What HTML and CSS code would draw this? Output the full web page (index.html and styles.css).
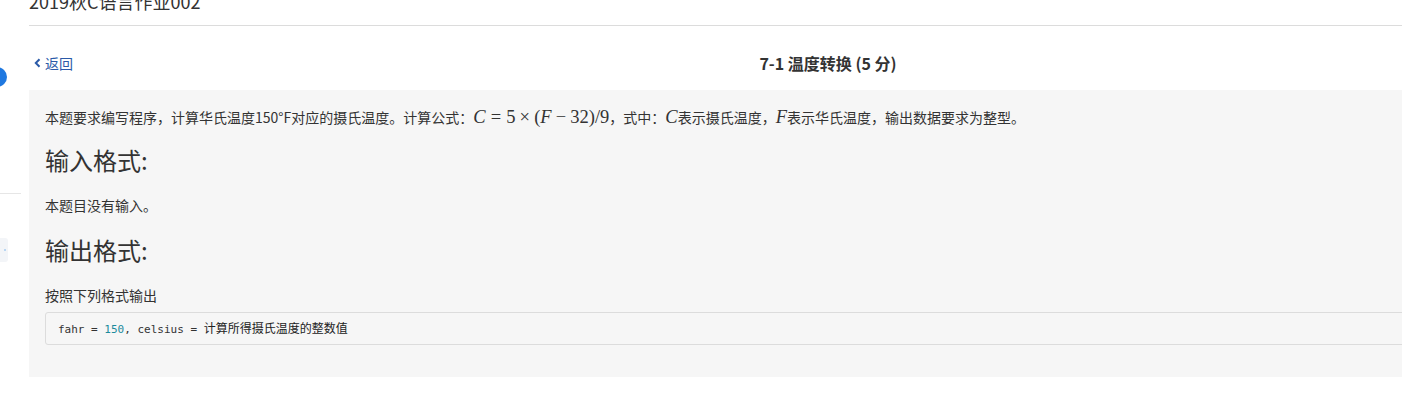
FILE: index.html
```html
<!DOCTYPE html>
<html lang="zh-CN">
<head>
<meta charset="utf-8">
<title>7-1 温度转换</title>
<link rel="stylesheet" href="styles.css">
</head>
<body>
<div class="layout">
  <aside class="sidebar">
    <div class="avatar"></div>
    <div class="side-rule"></div>
    <div class="side-chip"><span class="chip-mark"></span></div>
  </aside>
  <main class="main">
    <h1 class="set-title">2019秋C语言作业002</h1>
    <div class="problem-head">
      <a class="back" href="#">
        <svg class="chev" width="7" height="10" viewBox="0 0 7 10"><polyline points="5.5,1.2 1.8,5 5.5,8.8" fill="none" stroke="#2a5aa8" stroke-width="2"/></svg>
        <span>返回</span>
      </a>
      <div class="problem-title">7-1 温度转换 (5 分)</div>
      <div></div>
    </div>
    <section class="panel">
      <p class="txt">本题要求编写程序，计算华氏温度150°F对应的摄氏温度。计算公式：<span class="math"><i>C</i><span class="rel">=</span>5<span class="bin">×</span>(<i>F</i><span class="bin">−</span>32)/9</span>，式中：<span class="math"><i>C</i></span>表示摄氏温度，<span class="math"><i>F</i></span>表示华氏温度，输出数据要求为整型。</p>
      <h2 class="sec sec-first">输入格式:</h2>
      <p class="txt">本题目没有输入。</p>
      <h2 class="sec">输出格式:</h2>
      <p class="txt">按照下列格式输出</p>
      <pre class="code">fahr = <span class="num">150</span>, celsius = <span class="cjk">计算所得摄氏温度的整数值</span></pre>
    </section>
  </main>
</div>
</body>
</html>
```
FILE: styles.css
```css
html, body {
  margin: 0;
  padding: 0;
  overflow: hidden;
  background: #fff;
}
body {
  font-family: "Noto Sans CJK SC", "Noto Sans", sans-serif;
  color: #333;
  width: 1402px;
  height: 413px;
}
.layout {
  display: flex;
  align-items: flex-start;
}
.sidebar {
  width: 21px;
  flex: 0 0 21px;
  display: flex;
  flex-direction: column;
}
.avatar {
  width: 20px;
  height: 20px;
  border-radius: 50%;
  background: #1f78e0;
  margin-left: -13px;
  margin-top: 67px;
}
.side-rule {
  height: 1px;
  background: #e6e6e6;
  margin-top: 106px;
}
.side-chip {
  width: 14px;
  height: 24px;
  margin-left: -6px;
  margin-top: 44px;
  background: #f3f5f8;
  border-radius: 3px;
  position: relative;
}
.chip-mark {
  position: absolute;
  right: 2px;
  top: 11px;
  width: 2px;
  height: 2px;
  background: #b9d6f2;
}
.main {
  margin-left: 8px;
  width: 1598px;
  flex: 0 0 1598px;
}
.set-title {
  margin: -11px 0 0;
  padding-bottom: 12px;
  font-size: 18px;
  line-height: 24px;
  font-weight: normal;
  color: #333;
  border-bottom: 1px solid #dcdcdc;
}
.problem-head {
  display: grid;
  grid-template-columns: 1fr auto 1fr;
  align-items: center;
  height: 54px;
  padding-top: 10px;
}
.back {
  display: flex;
  align-items: center;
  gap: 4px;
  padding-left: 5px;
  font-size: 14px;
  line-height: 20px;
  color: #2a5aa8;
  text-decoration: none;
  justify-self: start;
}
.chev {
  display: block;
}
.problem-title {
  font-size: 16px;
  font-weight: bold;
  line-height: 22px;
  color: #333;
}
.panel {
  background: #f6f6f6;
  padding: 16px 0 16px 16px;
}
.txt {
  margin: 0;
  font-size: 14px;
  line-height: 22px;
  color: #333;
}
.sec {
  margin: 19px 0 20px;
  font-size: 24px;
  line-height: 29px;
  font-weight: normal;
  color: #333;
}
.sec-first {
  margin-top: 17px;
}
.math {
  font-family: "Liberation Serif", "DejaVu Serif", serif;
  font-size: 18.5px;
  line-height: 1;
}
.math i {
  font-style: italic;
}
.rel {
  margin: 0 0.2778em;
}
.bin {
  margin: 0 0.2222em;
}
.code {
  margin: 6px 0 16px;
  padding: 6px 12px;
  border: 1px solid #dcdcdc;
  border-radius: 3px;
  background: #f6f6f6;
  font-family: "DejaVu Sans Mono", "Liberation Mono", monospace;
  font-size: 11px;
  line-height: 17px;
  color: #333;
}
.num {
  color: #1b8b9c;
}
.cjk {
  font-family: "Noto Sans CJK SC", sans-serif;
  font-size: 12px;
  color: #222;
}
```
